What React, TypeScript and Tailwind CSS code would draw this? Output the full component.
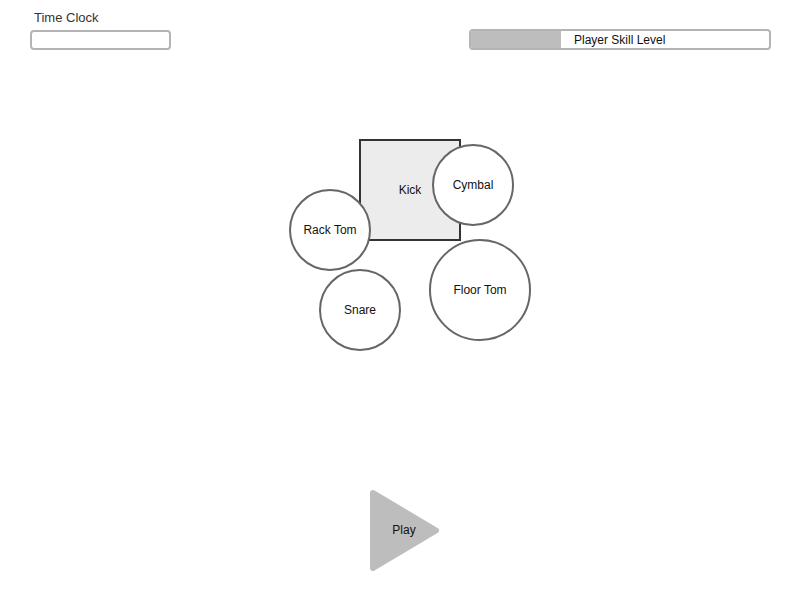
import React from "react";

function Drum({ label, className }: { label: string; className: string }) {
  return (
    <div
      className={`absolute flex items-center justify-center rounded-full border-2 border-[#666] bg-white text-[12px] text-[#111] ${className}`}
    >
      {label}
    </div>
  );
}

export default function App() {
  return (
    <div
      className="w-[790px] h-[590px] bg-white flex flex-col"
      style={{ fontFamily: '"Liberation Sans", Arial, sans-serif' }}
    >
      <div className="flex items-end justify-between pl-[30px] pr-[19px] pt-[10px]">
        <div className="flex flex-col">
          <div className="pl-[4px] text-[13px] leading-[15px] text-[#333]">Time Clock</div>
          <div className="mt-[5px] h-[20px] w-[141px] rounded-[4px] border-2 border-[#b4b4b4] bg-white" />
        </div>
        <div className="flex h-[21px] w-[302px] items-center overflow-hidden rounded-[4px] border-2 border-[#b4b4b4] bg-white">
          <div className="h-full w-[90px] bg-[#bdbdbd]" />
          <div className="pl-[13px] text-[12px] text-[#111]">Player Skill Level</div>
        </div>
      </div>

      <div className="relative ml-[289px] mt-[89px] h-[212px] w-[242px]">
        <div className="absolute left-[70px] top-0 flex h-[102px] w-[102px] items-center justify-center border-2 border-[#333] bg-[#ececec] text-[12px] text-[#111]">
          Kick
        </div>
        <Drum label="Cymbal" className="left-[143px] top-[5px] h-[82px] w-[82px]" />
        <Drum label="Rack Tom" className="left-0 top-[50px] h-[82px] w-[82px]" />
        <Drum label="Snare" className="left-[30px] top-[130px] h-[82px] w-[82px]" />
        <Drum label="Floor Tom" className="left-[140px] top-[100px] h-[102px] w-[102px]" />
      </div>

      <div className="relative ml-[370px] mt-[139px] flex h-[81px] w-[70px] items-center justify-center">
        <svg className="absolute inset-0" width="70" height="81" viewBox="0 0 70 81">
          <polygon
            points="3,3 66,40.5 3,78"
            fill="#bdbdbd"
            stroke="#bdbdbd"
            strokeWidth="6"
            strokeLinejoin="round"
          />
        </svg>
        <span className="relative -ml-[2px] -mt-[1px] text-[12px] text-[#111]">Play</span>
      </div>
    </div>
  );
}
